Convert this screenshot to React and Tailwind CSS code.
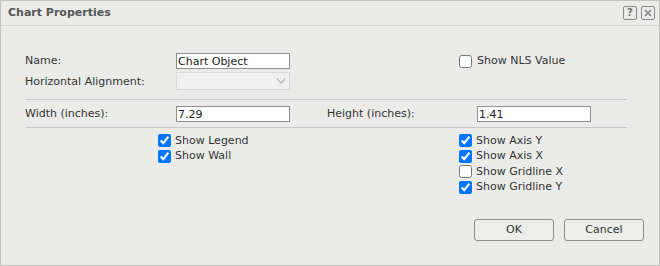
import React from 'react';

const font = { fontFamily: '"DejaVu Sans", Verdana, sans-serif' };

const Check = ({ checked }) => (
  <input type="checkbox" checked={checked} readOnly className="w-[13px] h-[13px] m-0 accent-[#0075ff]" />
);

const CheckRow = ({ checked, label }) => (
  <div className="flex items-center h-[15.5px]">
    <div className="w-[17px] flex items-center"><Check checked={checked} /></div>
    <span>{label}</span>
  </div>
);

const TextBox = ({ value }) => (
  <div className="w-[114px] h-[16px] bg-white border border-[#8f8f8f] flex items-center px-[1px] leading-none text-[#222]">
    {value}
  </div>
);

export default function App() {
  return (
    <div className="w-[660px] h-[266px] bg-[#ebecea] border border-[#c2c3c1] flex flex-col text-[11px] text-[#333]" style={font}>
      {/* title bar */}
      <div className="h-[25px] shrink-0 border-b border-[#d6d7d5] flex items-center justify-between pl-[7px] pr-[4px]">
        <span className="font-bold text-[11px] text-[#555]">Chart Properties</span>
        <div className="flex gap-[4px]">
          <div className="w-[14px] h-[14px] border border-[#8a8a8a] rounded-[2px] flex items-center justify-center text-[10px] font-bold text-[#777] leading-none">?</div>
          <div className="w-[14px] h-[14px] border border-[#8a8a8a] rounded-[2px] flex items-center justify-center">
            <svg width="8" height="8" viewBox="0 0 8 8"><path d="M1 1L7 7M7 1L1 7" stroke="#777" strokeWidth="1.3" /></svg>
          </div>
        </div>
      </div>

      <div className="pl-[24px] pr-[32px] flex flex-col">
        {/* name + alignment */}
        <div className="flex mt-[27px]">
          <div className="w-[151px] flex flex-col">
            <div className="h-[17px] flex items-center">Name:</div>
            <div className="h-[18px] mt-[3px] flex items-center">Horizontal Alignment:</div>
          </div>
          <div className="w-[283px] flex flex-col">
            <TextBox value="Chart Object" />
            <div className="w-[114px] h-[18px] mt-[3px] bg-[#f0f0f0] border border-[#d9d9d9] flex items-center justify-end pr-[3px]">
              <svg width="10" height="6" viewBox="0 0 10 6"><path d="M1 1L5 5L9 1" fill="none" stroke="#b5b5b5" strokeWidth="1.3" /></svg>
            </div>
          </div>
          <div className="h-[17px] flex items-center">
            <div className="w-[18px] flex items-center"><Check checked={false} /></div>
            <span>Show NLS Value</span>
          </div>
        </div>

        <div className="h-px bg-[#c5c9ce] mt-[8px]" />

        {/* width / height */}
        <div className="flex items-center mt-[6px] h-[16px]">
          <div className="w-[151px]">Width (inches):</div>
          <div className="w-[151px]"><TextBox value="7.29" /></div>
          <div className="w-[150px]">Height (inches):</div>
          <TextBox value="1.41" />
        </div>

        <div className="h-px bg-[#c5c9ce] mt-[5px]" />

        {/* options */}
        <div className="flex mt-[5px]">
          <div className="w-[133px]" />
          <div className="w-[301px] flex flex-col">
            <CheckRow checked label="Show Legend" />
            <CheckRow checked label="Show Wall" />
          </div>
          <div className="flex flex-col">
            <CheckRow checked label="Show Axis Y" />
            <CheckRow checked label="Show Axis X" />
            <CheckRow checked={false} label="Show Gridline X" />
            <CheckRow checked label="Show Gridline Y" />
          </div>
        </div>
      </div>

      {/* buttons */}
      <div className="flex justify-end gap-[10px] pr-[15px] mt-auto mb-[24px]">
        <button className="w-[80px] h-[22px] border border-[#8d8d8d] rounded-[3px] bg-[#ededeb] text-[#333]">OK</button>
        <button className="w-[80px] h-[22px] border border-[#8d8d8d] rounded-[3px] bg-[#ededeb] text-[#333]">Cancel</button>
      </div>
    </div>
  );
}
